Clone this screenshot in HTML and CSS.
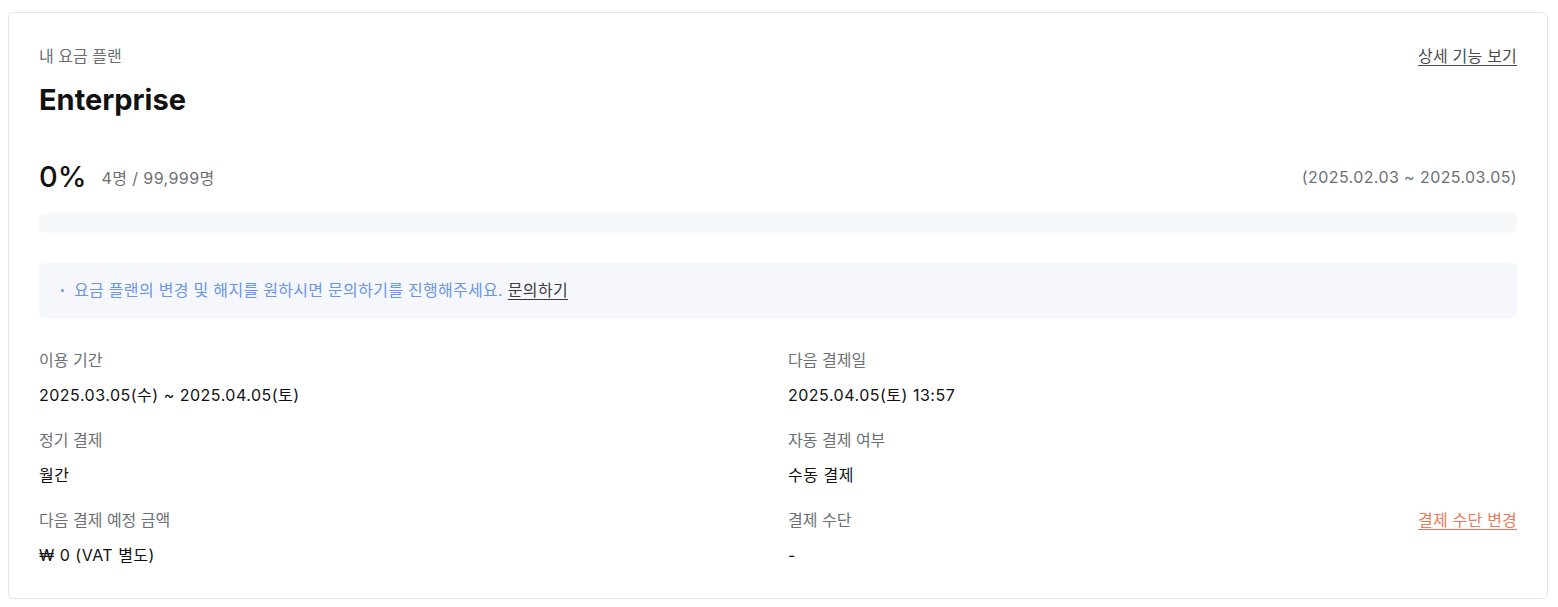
FILE: index.html
```html
<!DOCTYPE html>
<html>
    <head>
        <meta charset="utf-8">
        <link rel="stylesheet" href="styles.css">
        <title>내 요금 플랜</title>
    </head>
    <body>
        <section class="plan-card">
            <div class="plan-head">
                <span class="plan-label">내 요금 플랜</span>
                <a class="plan-link" href="#">상세 기능 보기</a>
            </div>
            <h1 class="plan-name">Enterprise</h1>

            <div class="usage-row">
                <div class="usage-left">
                    <span class="usage-pct">0%</span>
                    <span class="usage-count">4명 / 99,999명</span>
                </div>
                <span class="usage-period">(2025.02.03 ~ 2025.03.05)</span>
            </div>
            <div class="usage-bar"><div class="usage-fill" style="width: 0%"></div></div>

            <ul class="notice">
                <li>요금 플랜의 변경 및 해지를 원하시면 문의하기를 진행해주세요. <a href="#">문의하기</a></li>
            </ul>

            <dl class="details">
                <div class="detail">
                    <dt>이용 기간</dt>
                    <dd>2025.03.05(수) ~ 2025.04.05(토)</dd>
                </div>
                <div class="detail">
                    <dt>다음 결제일</dt>
                    <dd>2025.04.05(토) 13:57</dd>
                </div>
                <div class="detail">
                    <dt>정기 결제</dt>
                    <dd>월간</dd>
                </div>
                <div class="detail">
                    <dt>자동 결제 여부</dt>
                    <dd>수동 결제</dd>
                </div>
                <div class="detail">
                    <dt>다음 결제 예정 금액</dt>
                    <dd>₩ 0 (VAT 별도)</dd>
                </div>
                <div class="detail">
                    <dt>결제 수단 <a class="change-link" href="#">결제 수단 변경</a></dt>
                    <dd>-</dd>
                </div>
            </dl>
        </section>
    </body>
</html>
```

FILE: styles.css
```css
body {
  margin: 0;
  padding: 12px 10px 8px 8px;
  background: #fff;
  font-family: Inter, "Noto Sans CJK KR", sans-serif;
  color: #111;
}

.plan-card {
  border: 1px solid #e3e4e6;
  border-radius: 6px;
  padding: 30px 30px 32px 30px;
}

.plan-head {
  display: flex;
  justify-content: space-between;
  align-items: center;
  height: 24px;
}

.plan-label {
  font-size: 16px;
  color: #6e6f73;
}

.plan-link {
  font-size: 16px;
  letter-spacing: 0.2px;
  color: #4a4b50;
  text-decoration: underline;
  text-underline-offset: 3px;
}

.plan-name {
  margin: 15px 0 0;
  font-size: 29px;
  line-height: 36px;
  font-weight: 700;
}

.usage-row {
  display: flex;
  justify-content: space-between;
  align-items: center;
  margin-top: 40px;
  height: 36px;
}

.usage-left {
  display: flex;
  align-items: center;
  gap: 15px;
}

.usage-pct {
  font-size: 29px;
  font-weight: 500;
}

.usage-count,
.usage-period {
  font-size: 16px;
  letter-spacing: 0.4px;
  color: #6e6f73;
  padding-top: 2px;
}

.usage-bar {
  margin-top: 19px;
  height: 20px;
  background: #f7f8fa;
  border-radius: 6px;
  overflow: hidden;
}

.usage-fill {
  height: 100%;
  background: #6a96e6;
}

.notice {
  margin: 30px 0 0;
  padding: 16px 20px 16px 35px;
  background: #f5f7fc;
  border-radius: 6px;
  list-style: none;
}

.notice li {
  position: relative;
  font-size: 16px;
  line-height: 23px;
  letter-spacing: 0.3px;
  color: #6a96e6;
}

.notice li::before {
  content: "";
  position: absolute;
  left: -13px;
  top: 10px;
  width: 3px;
  height: 3px;
  border-radius: 50%;
  background: #6a96e6;
}

.notice a {
  color: #3a3b40;
  text-decoration: underline;
  text-underline-offset: 3px;
}

.details {
  display: grid;
  grid-template-columns: 1fr 1fr;
  column-gap: 20px;
  row-gap: 23px;
  margin: 31px 0 0;
}

.detail dt {
  display: flex;
  justify-content: space-between;
  font-size: 16px;
  line-height: 22px;
  color: #6e6f73;
}

.detail dd {
  margin: 13px 0 0;
  font-size: 16px;
  line-height: 22px;
  letter-spacing: 0.5px;
  color: #111;
}

.change-link {
  color: #e8795b;
  letter-spacing: 0.2px;
  text-decoration: underline;
  text-underline-offset: 3px;
}
```
